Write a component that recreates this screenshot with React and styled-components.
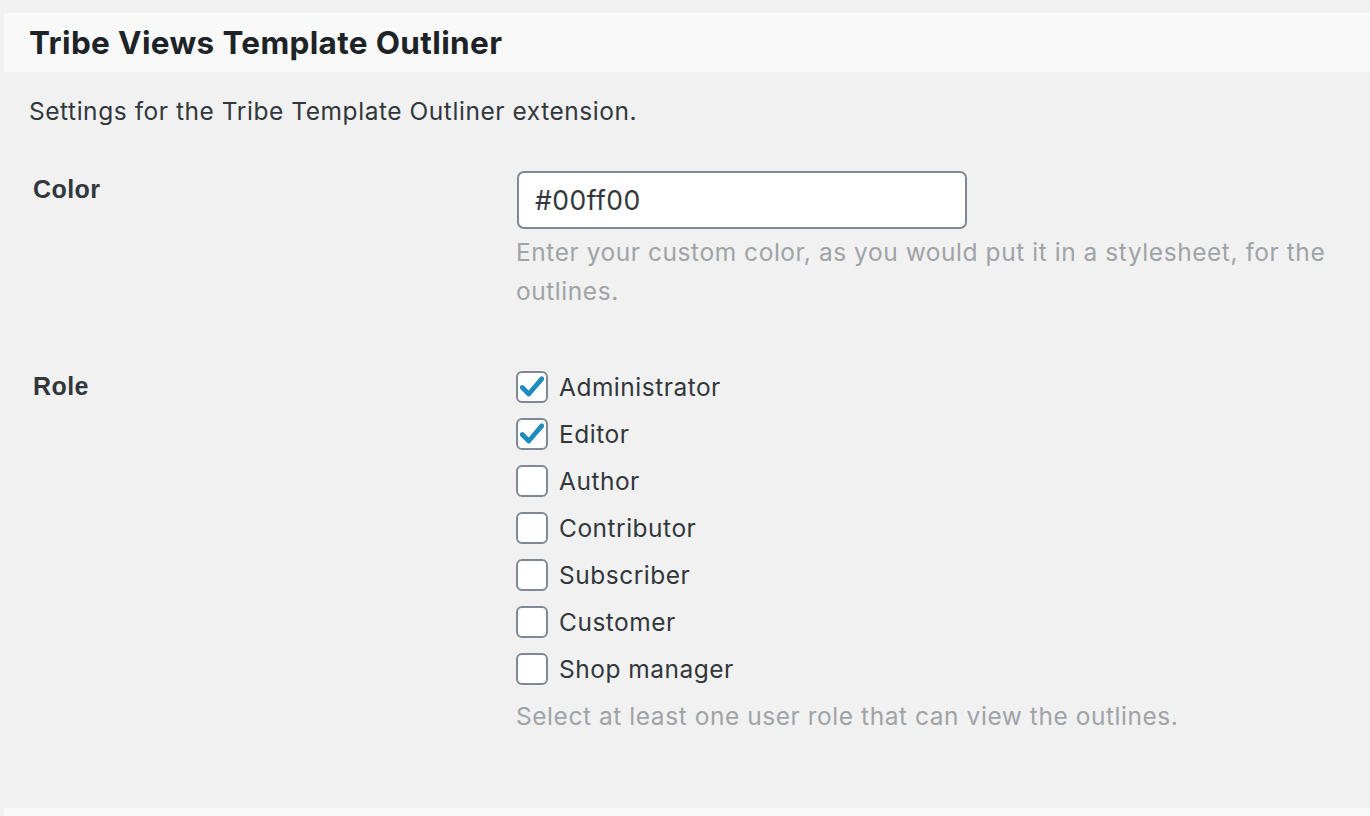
import React, { useState } from "react";
import styled, { createGlobalStyle } from "styled-components";

const GlobalStyle = createGlobalStyle`
  html, body {
    margin: 0;
    padding: 0;
    background: #f1f1f1;
  }
  body {
    font-family: Inter, "Noto Sans", sans-serif;
    color: #32373c;
  }
`;

const Page = styled.div`
  padding: 12px 0 0 4px;
  min-height: 816px;
  box-sizing: border-box;
  display: flex;
  flex-direction: column;
`;

const Header = styled.div`
  height: 60px;
  background: #f9f9f9;
  border-top: 1px solid #f3f3f3;
  box-sizing: border-box;
  display: flex;
  align-items: center;
  padding: 0 25px;
`;

const Title = styled.h2`
  margin: 0;
  font-size: 31.5px;
  font-weight: 700;
  color: #1d2327;
  letter-spacing: 0.35px;
`;

const Content = styled.div`
  padding: 0 25px;
`;

const Intro = styled.p`
  margin: 25px 0 0;
  font-size: 24.5px;
  line-height: 28px;
  letter-spacing: 0.55px;
  color: #32373c;
`;

const FormTable = styled.div`
  display: grid;
  grid-template-columns: 488px 1fr;
  margin-top: 46px;
  row-gap: 52px;
`;

const Label = styled.div`
  font-family: "Liberation Sans", Arial, sans-serif;
  font-weight: 700;
  font-size: 25px;
  line-height: 28px;
  letter-spacing: 0.4px;
  color: #32373c;
  padding: ${({ top }) => top}px 0 0 4px;
`;

const Field = styled.div`
  display: flex;
  flex-direction: column;
`;

const TextInput = styled.input`
  width: 450px;
  height: 58px;
  box-sizing: border-box;
  border: 2px solid #7e8993;
  border-radius: 7px;
  background: #fff;
  padding: 0 16px;
  font-family: Inter, "Noto Sans", sans-serif;
  font-size: 26.5px;
  letter-spacing: 0.5px;
  color: #32373c;
  outline: none;
`;

const Help = styled.p`
  margin: ${({ top }) => top}px 0 0 -1px;
  font-size: 24.5px;
  line-height: 39px;
  letter-spacing: 0.55px;
  color: #a0a3a7;
  max-width: 830px;
`;

const CheckList = styled.div`
  display: flex;
  flex-direction: column;
`;

const CheckRow = styled.label`
  display: flex;
  align-items: center;
  height: 47px;
  gap: 11px;
  margin-left: -1px;
  font-size: 24.5px;
  letter-spacing: 0.5px;
  color: #32373c;
  cursor: pointer;
`;

const Box = styled.span`
  width: 32px;
  height: 32px;
  box-sizing: border-box;
  border: 2px solid #7e8993;
  border-radius: 6px;
  background: #fff;
  display: flex;
  align-items: center;
  justify-content: center;
  flex-shrink: 0;
`;

const BottomBar = styled.div`
  margin-top: auto;
  height: 8px;
  background: #f9f9f9;
`;

const roles = [
  { name: "Administrator", checked: true },
  { name: "Editor", checked: true },
  { name: "Author", checked: false },
  { name: "Contributor", checked: false },
  { name: "Subscriber", checked: false },
  { name: "Customer", checked: false },
  { name: "Shop manager", checked: false },
];

const Check = () => (
  <svg width="26" height="26" viewBox="0 0 24 24">
    <path
      d="M3 12.5 L9 18.5 L21 4.5"
      fill="none"
      stroke="#1e8cbe"
      strokeWidth="4.4"
      strokeLinecap="round"
      strokeLinejoin="round"
    />
  </svg>
);

const App = () => {
  const [checked, setChecked] = useState(roles.map((r) => r.checked));

  const toggle = (i) =>
    setChecked((prev) => prev.map((v, j) => (j === i ? !v : v)));

  return (
    <Page>
      <GlobalStyle />
      <Header>
        <Title>Tribe Views Template Outliner</Title>
      </Header>
      <Content>
        <Intro>Settings for the Tribe Template Outliner extension.</Intro>
        <FormTable>
          <Label top={4}>Color</Label>
          <Field>
            <TextInput defaultValue="#00ff00" />
            <Help top={4}>
              Enter your custom color, as you would put it in a stylesheet, for
              the outlines.
            </Help>
          </Field>
          <Label top={9}>Role</Label>
          <Field>
            <CheckList>
              {roles.map((role, i) => (
                <CheckRow key={role.name} onClick={() => toggle(i)}>
                  <Box>{checked[i] && <Check />}</Box>
                  {role.name}
                </CheckRow>
              ))}
            </CheckList>
            <Help top={5}>
              Select at least one user role that can view the outlines.
            </Help>
          </Field>
        </FormTable>
      </Content>
      <BottomBar />
    </Page>
  );
};

export default App;
